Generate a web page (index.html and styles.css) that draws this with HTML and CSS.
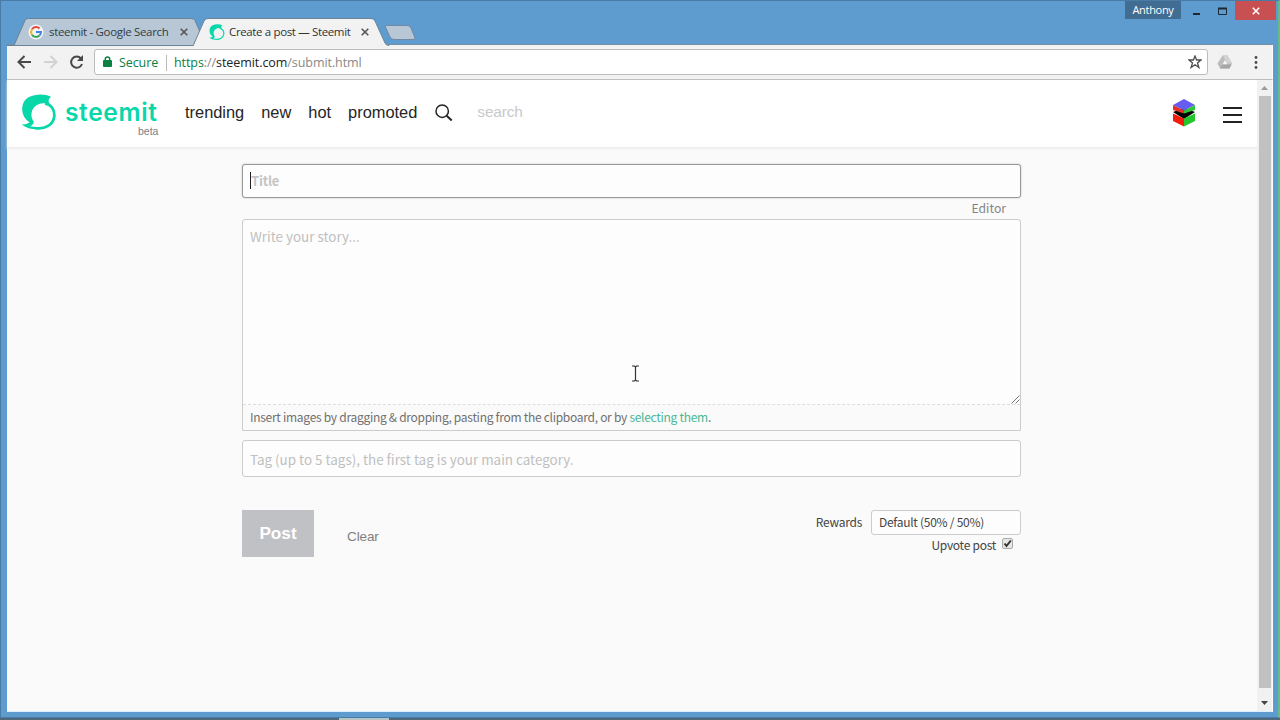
FILE: index.html
```html
<!DOCTYPE html>
<html lang="en">
<head>
<meta charset="utf-8">
<title>Create a post — Steemit</title>
<link rel="stylesheet" href="styles.css">
</head>
<body>
<div class="window">
  <div class="titlebar">
    <svg class="tab-shapes" width="430" height="28" viewBox="0 18 430 28">
      <path d="M6 45.500H14L25 20.500Q26 18.500 28 18.500H191Q194 18.500 195 20.500L206 45.500Z" fill="#b8c7d6" stroke="#6d8397"/>
      <path d="M193 46L204 21Q205 18.500 208 18.500H371Q374 18.500 375 21L385 43Q386 45.500 389 45.500V47H193Z" fill="#f2f2f2" stroke="#6d8397"/>
      <path d="M386.500 25.500H407Q410 25.500 411 28L415 38Q415.500 39.500 413 39.500H394Q391.500 39.500 390 37L385.500 27Q385 25.500 386.500 25.500Z" fill="#b8c7d6" stroke="#7189a2"/>
    </svg>
    <div class="tab first">
      <svg width="16" height="16" viewBox="0 0 16 16"><circle cx="8" cy="8" r="7.500" fill="#f3f5f8"/><g fill="none" stroke-width="2"><path d="M4 5.200A5 5 0 0 1 11.600 4.500" stroke="#e34b3f"/><path d="M4 5.200A5 5 0 0 0 4 10.800" stroke="#efb52d"/><path d="M4 10.800A5 5 0 0 0 11.500 11.500" stroke="#3ba45a"/><path d="M8 8H13Q13 10.300 11.500 11.500" stroke="#4580e6"/></g></svg>
      <span class="tab-name one">steemit - Google Search</span>
      <svg class="tab-x" width="8" height="8" viewBox="0 0 8 8"><path d="M.7.7L7.300 7.300M7.300.7L.7 7.300"/></svg>
    </div>
    <div class="tab second">
      <svg width="16" height="16" viewBox="0 0 36 36"><use href="#mark"/></svg>
      <span class="tab-name two">Create a post — Steemit</span>
      <svg class="tab-x" width="8" height="8" viewBox="0 0 8 8"><path d="M.7.7L7.300 7.300M7.300.7L.7 7.300"/></svg>
    </div>
    <div class="controls">
      <span class="user">Anthony</span>
      <svg width="54" height="20" viewBox="0 0 54 20"><path d="M12 13H19" stroke="#1d2a35" stroke-width="2"/><path d="M37.500 7.500H45.500V13.500H37.500Z" fill="none" stroke="#1d2a35"/><path d="M37 7.500H46" stroke="#1d2a35" stroke-width="2"/></svg>
      <span class="close"><svg width="8" height="8" viewBox="0 0 8 8"><path d="M.8.8L7.200 7.200M7.200.8L.8 7.200" stroke="#fff" stroke-width="1.600"/></svg></span>
    </div>
  </div>
  <div class="toolbar">
    <svg class="navicons" width="87" height="34" viewBox="7 45 87 34" fill="none" stroke-width="2"><path d="M31 62H19M24.500 56L18.500 62L24.500 68" stroke="#494949"/><path d="M44 62H56M50.500 56L56.500 62L50.500 68" stroke="#d2d2d2"/><path d="M81 58.500A5.600 5.600 0 1 0 82 64" stroke="#494949"/><path d="M83 55V61H77Z" fill="#494949"/></svg>
    <div class="address">
      <svg width="9" height="12" viewBox="0 0 9 12"><path d="M2.300 5V3Q2.300 1 4.500 1T6.700 3V5" fill="none" stroke="#0b8043" stroke-width="1.500"/><rect y="4" width="9" height="7" rx="1" fill="#0b8043"/></svg>
      <span class="secure">Secure</span>
      <span class="url"><span class="scheme">https<i>://</i></span><b>steemit.com</b><span class="path">/submit.html</span></span>
      <svg class="star" width="14" height="14" viewBox="0 0 14 14"><path d="M7 1L8.600 5H13L9.500 7.900L10.900 12.500L7 9.800L3.100 12.500L4.500 7.900L1 5H5.400Z" fill="none" stroke="#4d4d4d" stroke-width="1.300"/></svg>
    </div>
    <svg class="extras" width="64" height="34" viewBox="1209 45 64 34"><path d="M1223.500 55.500H1228.500L1233 63.500L1230.500 68.500H1221L1218.500 63.500Z" fill="#bcbcbc"/><path d="M1228.500 55.500L1233 63.500H1228L1224 56Z" fill="#d2d2d2"/><path d="M1226 60L1228.500 64.500H1223.500Z" fill="#f5f5f5"/><path d="M1221 68.500L1223.500 64.500H1232.500L1230.500 68.500Z" fill="#a6a6a6"/><g fill="#4b4b4b"><circle cx="1257" cy="57.500" r="1.400"/><circle cx="1257" cy="62.500" r="1.400"/><circle cx="1257" cy="67.500" r="1.400"/></g></svg>
  </div>
  <div class="viewport">
    <div class="page">
      <header class="header">
        <svg class="logo" width="36" height="36" viewBox="0 0 36 36"><g id="mark"><path d="M9 28.500C-1 23-1.500 8 8 3C15-.5 24-.3 30 2.800Q27.500 4.500 27.500 7L29 11C22 7 13.500 10 11 17C9.800 21 10.500 25 13 28Z" fill="#07d7a9"/><path d="M24 9.700C31 10.500 34 17 33.200 23C32 31 24 35 16 34.300C11.500 34 7.500 33.500 4.500 31.500C8.500 31 10.500 29.500 11.200 27" fill="none" stroke="#07d7a9" stroke-width="2.700"/><path d="M4 31L11 27L13 29L10 32Z" fill="#07d7a9"/></g></svg>
        <div class="brand"><span class="wordmark">steemit</span><span class="beta">beta</span></div>
        <nav class="menu"><a>trending</a><a>new</a><a>hot</a><a>promoted</a></nav>
        <svg class="lens" width="18" height="18" viewBox="0 0 18 18" fill="none" stroke="#252525"><circle cx="7.200" cy="7.200" r="6.200" stroke-width="1.500"/><path d="M11.700 11.700L16.700 16.500" stroke-width="2"/></svg>
        <span class="search">search</span>
        <svg class="avatar" width="24" height="30" viewBox="0 0 24 30"><path d="M1 14L12 10L23 14L12 21Z" fill="#000"/><path d="M12 1L23 7L12 12.500L1 7Z" fill="#665df0"/><path d="M1 7L12 12.500V15.500L1 12Z" fill="#e52f27"/><path d="M23 7L12 12.500V15.500L23 12Z" fill="#32c33b"/><path d="M1 15.500L12 20.500V28.500L1 23Z" fill="#f31c0c"/><path d="M23 15.500L12 20.500V28.500L23 23Z" fill="#22c72b"/></svg>
        <div class="burger"><i></i><i></i><i></i></div>
      </header>
      <main class="form">
        <div class="field title"><span class="caret"></span><span>Title</span></div>
        <div class="mode">Editor</div>
        <div class="story">
          <div class="story-text"><span>Write your story...</span><svg class="grip" width="9" height="9" viewBox="0 0 9 9"><path d="M.5 8.500L8.500.5M4.500 8.500L8.500 4.500" stroke="#777"/></svg></div>
          <div class="hint">Insert images by dragging &amp; dropping, pasting from the clipboard, or by <em>selecting them</em>.</div>
        </div>
        <div class="field tags">Tag (up to 5 tags), the first tag is your main category.</div>
        <div class="actions">
          <span class="post">Post</span><span class="clear">Clear</span>
          <div class="options">
            <div class="rewards"><span>Rewards</span><span class="select">Default (50% / 50%)</span></div>
            <div class="upvote"><span>Upvote post</span><svg width="11" height="11" viewBox="0 0 11 11"><rect x=".5" y=".5" width="10" height="10" rx="1.500" fill="#e6e6e6" stroke="#aaa"/><path d="M2.500 5.500L4.500 8L8.800 2.500" fill="none" stroke="#333" stroke-width="2"/></svg></div>
          </div>
        </div>
      </main>
    </div>
    <div class="scrollbar"><svg width="7" height="4" viewBox="0 0 7 4"><path d="M0 4L3.500 0L7 4Z" fill="#9a9a9a"/></svg><div class="thumb"></div><svg width="7" height="4" viewBox="0 0 7 4"><path d="M0 0L3.500 4L7 0Z" fill="#444"/></svg></div>
  </div>
  <svg class="pointer" width="9" height="17" viewBox="0 0 9 17"><path d="M1 1H3.500L4.500 2L5.500 1H8M4.500 2V15M1 16H3.500L4.500 15L5.500 16H8" fill="none" stroke="#333" stroke-width="1.200"/></svg>
</div>
<div class="desktop-bottom"><i></i></div>
</body>
</html>
```
FILE: styles.css
```css
* { box-sizing: border-box; }
body { margin: 0; width: 1280px; height: 720px; overflow: hidden; background: #5e9bce; font-family: "Noto Sans CJK SC", "Noto Sans", sans-serif; }
svg { display: block; flex: none; }
span, a { white-space: nowrap; }
.window { position: relative; height: 718px; padding: 0 5px 5px 6px; border: solid #487ba6; border-width: 1px 0 1px 1px; border-right: 2px solid #62bd8a; background: #5e9bce; }
.titlebar { position: relative; height: 44px; display: flex; border-bottom: 1px solid #7590a6; font-family: "Open Sans", sans-serif; }
.tab-shapes { position: absolute; left: -7px; top: 17px; }
.tab { position: relative; display: flex; align-items: center; height: 16px; margin-top: 23px; font-size: 12px; color: #333b43; }
.tab.first { margin-left: 21px; width: 181px; }
.tab.second { width: 165px; color: #333; }
.tab-name { margin: -1px 0 0 5px; flex: none; font-size: 11.500px; }
.tab-name.one { width: 120px; letter-spacing: -.33px; }
.tab-name.two { width: 124px; letter-spacing: -.36px; }
.tab-x { margin: -1px 0 0 11px; fill: none; stroke: #555; stroke-width: 1.600; }
.tab.second .tab-x { margin-left: 8px; }
.tab.second .tab-name { margin-left: 4px; }
.controls { margin-left: auto; display: flex; height: 19px; }
.user { width: 56px; height: 18px; background: #426d92; color: #fff; font-size: 11px; line-height: 18px; letter-spacing: -.3px; text-align: center; }
.close { width: 41px; margin-right: -3px; height: 19px; background: #c85052; display: flex; align-items: center; justify-content: center; }
.toolbar { height: 35px; background: #f2f2f2; display: flex; align-items: center; border-bottom: 1px solid #bcbcbc; border-right: 1px solid #fff; }
.address { flex: 1; height: 26px; border: 1px solid #bcbcbc; border-radius: 3px; background: #fff; display: flex; align-items: center; padding-left: 8px; font-family: "Open Sans", sans-serif; font-size: 12.500px; }
.secure { color: #0b8043; margin: 1px 0 0 7px; width: 48px; height: 16px; line-height: 16px; border-right: 1px solid #bbb; letter-spacing: -.1px; }
.url { margin: 1px 0 0 7px; color: #222; line-height: 16px; letter-spacing: -.07px; }
.url b { font-weight: 400; }
.scheme { color: #0b8043; }
.scheme i, .path { color: #888; font-style: normal; }
.star { margin-left: auto; margin-right: 5px; }
.viewport { display: flex; height: 632px; background: #fafafa; border-right: 1px solid #fff; border-bottom: 1px solid #d9eff9; }
.page { flex: 1; background: #fafafa; }
.header { height: 68px; background: #fff; display: flex; border-bottom: 1px solid #eee; box-shadow: 0 1px 2px #eee; font-family: "Liberation Sans", Arial, sans-serif; }
.logo { margin: 14px 0 0 14px; }
.brand { width: 95px; margin: 13px 0 0 8px; display: flex; flex-direction: column; color: #07d7a9; }
.wordmark { font: 600 24.500px/38px Inter, sans-serif; letter-spacing: .65px; }
.beta { font-size: 10.500px; line-height: 12px; margin: -6px 0 0 73px; color: #788187; }
.menu { display: flex; gap: 17px; margin: 22px 0 0 25px; color: #252525; font-size: 16.400px; line-height: 20px; }
.lens { margin: 24px 0 0 18px; }
.search { margin: 22px 0 0 24px; color: #c9c9c9; font-size: 15.500px; letter-spacing: -.2px; line-height: 20px; }
.avatar { margin: 18px 0 0 auto; }
.burger { width: 19px; margin: 27px 15px 0 27px; display: flex; flex-direction: column; gap: 5px; }
.burger i { height: 2px; background: #222; }
.form { width: 779px; margin: 16px 0 0 235px; }
.field { border: 1px solid #ccc; border-radius: 3px; background: #fdfdfd; color: #c4c4c4; display: flex; align-items: center; padding-left: 7px; }
.title { height: 34px; padding-bottom: 1px; border-color: #999; box-shadow: 0 0 2px #bbb; font-weight: 700; font-size: 13px; letter-spacing: -.2px; }
.caret { width: 1px; height: 17px; background: #222; }
.mode { height: 21px; line-height: 21px; padding-right: 15px; text-align: right; font-size: 12.200px; color: #848484; }
.story { height: 212px; border: 1px solid #ccc; border-radius: 3px 3px 0 0; background: #fdfdfd; display: flex; flex-direction: column; }
.story-text { height: 185px; border-bottom: 1px dashed #ddd; color: #c0c0c0; display: flex; justify-content: space-between; align-items: flex-end; padding-left: 7px; font-size: 13.450px; line-height: 20px; }
.story-text span { align-self: flex-start; margin-top: 6px; }
.hint { flex: 1; padding-left: 7px; background: #fafafa; color: #707070; font-size: 12px; letter-spacing: -.28px; line-height: 24px; white-space: nowrap; }
.hint em { font-style: normal; color: #4cb793; }
.tags { height: 37px; margin-top: 9px; font-size: 13.430px; color: #c0c0c0; }
.actions { display: flex; margin-top: 33px; font-family: "Liberation Sans", Arial, sans-serif; }
.post { width: 72px; height: 47px; background: #c0c1c5; color: #fff; font-size: 17.200px; font-weight: 700; line-height: 46px; text-align: center; }
.clear { margin: 17px 0 0 33px; color: #808080; font-size: 13.500px; letter-spacing: -.1px; line-height: 20px; }
.options { margin-left: auto; display: flex; flex-direction: column; align-items: flex-end; color: #444; font: 12px/20px "Noto Sans CJK SC", sans-serif; letter-spacing: -.27px; }
.rewards { display: flex; align-items: center; gap: 9px; }
.rewards span:first-child { margin-top: -2px; }
.select { width: 150px; height: 25px; border: 1px solid #ccc; border-radius: 3px; background: #fdfdfd; line-height: 22px; padding-left: 7px; }
.upvote { display: flex; gap: 6px; margin: 0 8px 0 0; }
.upvote svg { margin-top: 3px; }
.scrollbar { width: 15px; background: #f1f1f1; display: flex; flex-direction: column; align-items: center; padding: 6px 0; }
.thumb { width: 12px; flex: 1; margin: 6px 0 13px; background: #c1c1c1; }
.pointer { position: absolute; left: 630px; top: 364px; }
.desktop-bottom { height: 2px; background: #4e687c; padding-left: 339px; }
.desktop-bottom i { display: block; width: 50px; height: 2px; background: #b5c6c5; }
```
